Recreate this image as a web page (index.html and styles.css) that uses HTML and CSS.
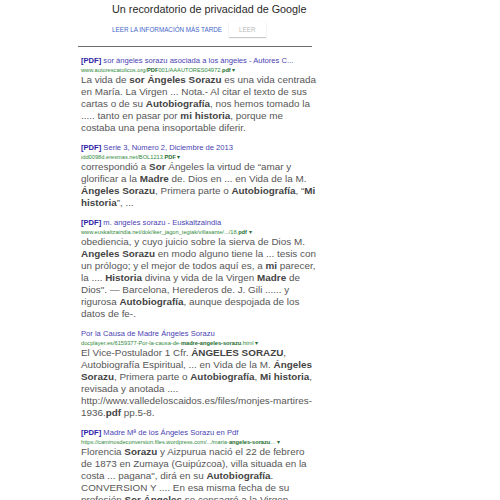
FILE: index.html
```html
<!DOCTYPE html>
<html lang="es">
<head>
<meta charset="utf-8">
<title>Resultados</title>
<link rel="stylesheet" href="styles.css">
</head>
<body>
<div class="dialog">
  <div class="dialog-title">Un recordatorio de privacidad de Google</div>
  <div class="dialog-actions">
    <span class="btn-later">LEER LA INFORMACIÓN MÁS TARDE</span>
    <span class="btn-read">LEER</span>
  </div>
</div>

<div class="results">
  <div class="result">
    <div class="r-title"><b>[PDF]</b> sor ángeles sorazu asociada a los ángeles - Autores C...</div>
    <div class="r-url">www.autorescatolicos.org/<b>PDF</b>001/AAAUTORES04972.<b>pdf</b> <span class="caret">▾</span></div>
    <div class="r-snip">La vida de <b>sor Ángeles Sorazu</b> es una vida centrada<br>en María. La Virgen ... Nota.- Al citar el texto de sus<br>cartas o de su <b>Autobiografía</b>, nos hemos tomado la<br>..... tanto en pasar por <b>mi historia</b>, porque me<br>costaba una pena insoportable diferir.</div>
  </div>

  <div class="result">
    <div class="r-title"><b>[PDF]</b> Serie 3, Número 2, Diciembre de 2013</div>
    <div class="r-url">idd0098d.eresmas.net/BOL1213.<b>PDF</b> <span class="caret">▾</span></div>
    <div class="r-snip">correspondió a <b>Sor</b> Ángeles la virtud de “amar y<br>glorificar a la <b>Madre</b> de. Dios en ... en Vida de la M.<br><b>Ángeles Sorazu</b>, Primera parte o <b>Autobiografía</b>, “<b>Mi</b><br><b>historia</b>”, ...</div>
  </div>

  <div class="result">
    <div class="r-title"><b>[PDF]</b> m. angeles sorazu - Euskaltzaindia</div>
    <div class="r-url">www.euskaltzaindia.net/dok/iker_jagon_tegiak/villasante/.../18.<b>pdf</b> <span class="caret">▾</span></div>
    <div class="r-snip">obediencia, y cuyo juicio sobre la sierva de Dios M.<br><b>Angeles Sorazu</b> en modo alguno tiene la ... tesis con<br>un prólogo; y el mejor de todos aquí es, a <b>mi</b> parecer,<br>la .... <b>Historia</b> divina y vida de la Virgen <b>Madre</b> de<br>Dios". — Barcelona, Herederos de. J. Gili ...... y<br>rigurosa <b>Autobiografía</b>, aunque despojada de los<br>datos de fe-.</div>
  </div>

  <div class="result">
    <div class="r-title">Por la Causa de Madre Ángeles Sorazu</div>
    <div class="r-url">docplayer.es/6159377-Por-la-causa-de-<b>madre-angeles-sorazu</b>.html <span class="caret">▾</span></div>
    <div class="r-snip">El Vice-Postulador 1 Cfr. <b>ÁNGELES SORAZU</b>,<br>Autobiografía Espiritual, ... en Vida de la M. <b>Ángeles</b><br><b>Sorazu</b>, Primera parte o <b>Autobiografía</b>, <b>Mi historia</b>,<br>revisada y anotada ....<br>http://www.valledeloscaidos.es/files/monjes-martires-<br>1936.<b>pdf</b> pp.5-8.</div>
  </div>

  <div class="result">
    <div class="r-title"><b>[PDF]</b> Madre Mª de los Ángeles Sorazu en Pdf</div>
    <div class="r-url">https://caminosdeconversion.files.wordpress.com/.../maria-<b>angeles-sorazu</b>... <span class="caret">▾</span></div>
    <div class="r-snip">Florencia <b>Sorazu</b> y Aizpurua nació el 22 de febrero<br>de 1873 en Zumaya (Guipúzcoa), villa situada en la<br>costa ... pagana", dirá en su <b>Autobiografía</b>.<br>CONVERSION Y .... En esa misma fecha de su<br>profesión <b>Sor Ángeles</b> se consagró a la Virgen</div>
  </div>
</div>
</body>
</html>
```

FILE: styles.css
```css
html, body {
  overflow: hidden;
}

body {
  margin: 0;
  background: #ffffff;
  font-family: "Liberation Sans", Arial, sans-serif;
}

.dialog {
  margin-left: 78px;
  width: 234px;
  height: 47px;
  box-sizing: border-box;
  padding: 2px 0 0 34px;
  border-bottom: 1px solid #6d6d6d;
}

.dialog-title {
  font-size: 10.8px;
  line-height: 14px;
  color: #2a2a2a;
  white-space: nowrap;
}

.dialog-actions {
  display: flex;
  align-items: center;
  gap: 7px;
  margin-top: 6px;
  height: 15px;
}

.btn-later {
  font-size: 6.3px;
  color: #3f67c9;
  white-space: nowrap;
}

.btn-read {
  font-size: 6.3px;
  color: #b9b9b9;
  height: 15px;
  line-height: 15px;
  padding: 0 11px 0 10px;
  box-shadow: 0 1px 1px rgba(0, 0, 0, 0.2), 0 0 1px rgba(0, 0, 0, 0.08);
}

.results {
  margin: 9px 0 0 81px;
  width: 260px;
}

.result {
  margin-bottom: 9px;
}

.r-title {
  font-size: 7.6px;
  line-height: 10px;
  color: #4a3fb4;
  white-space: nowrap;
}

.r-title b {
  color: #2d22a6;
}

.r-url {
  font-size: 5.7px;
  line-height: 8px;
  color: #2f8a3c;
  white-space: nowrap;
}

.r-url b {
  color: #1a6b29;
}

.caret {
  color: #2a6a34;
  font-size: 6px;
}

.r-snip {
  font-size: 9.9px;
  line-height: 12px;
  color: #565656;
  white-space: nowrap;
}

.r-snip b {
  color: #444444;
}
```
